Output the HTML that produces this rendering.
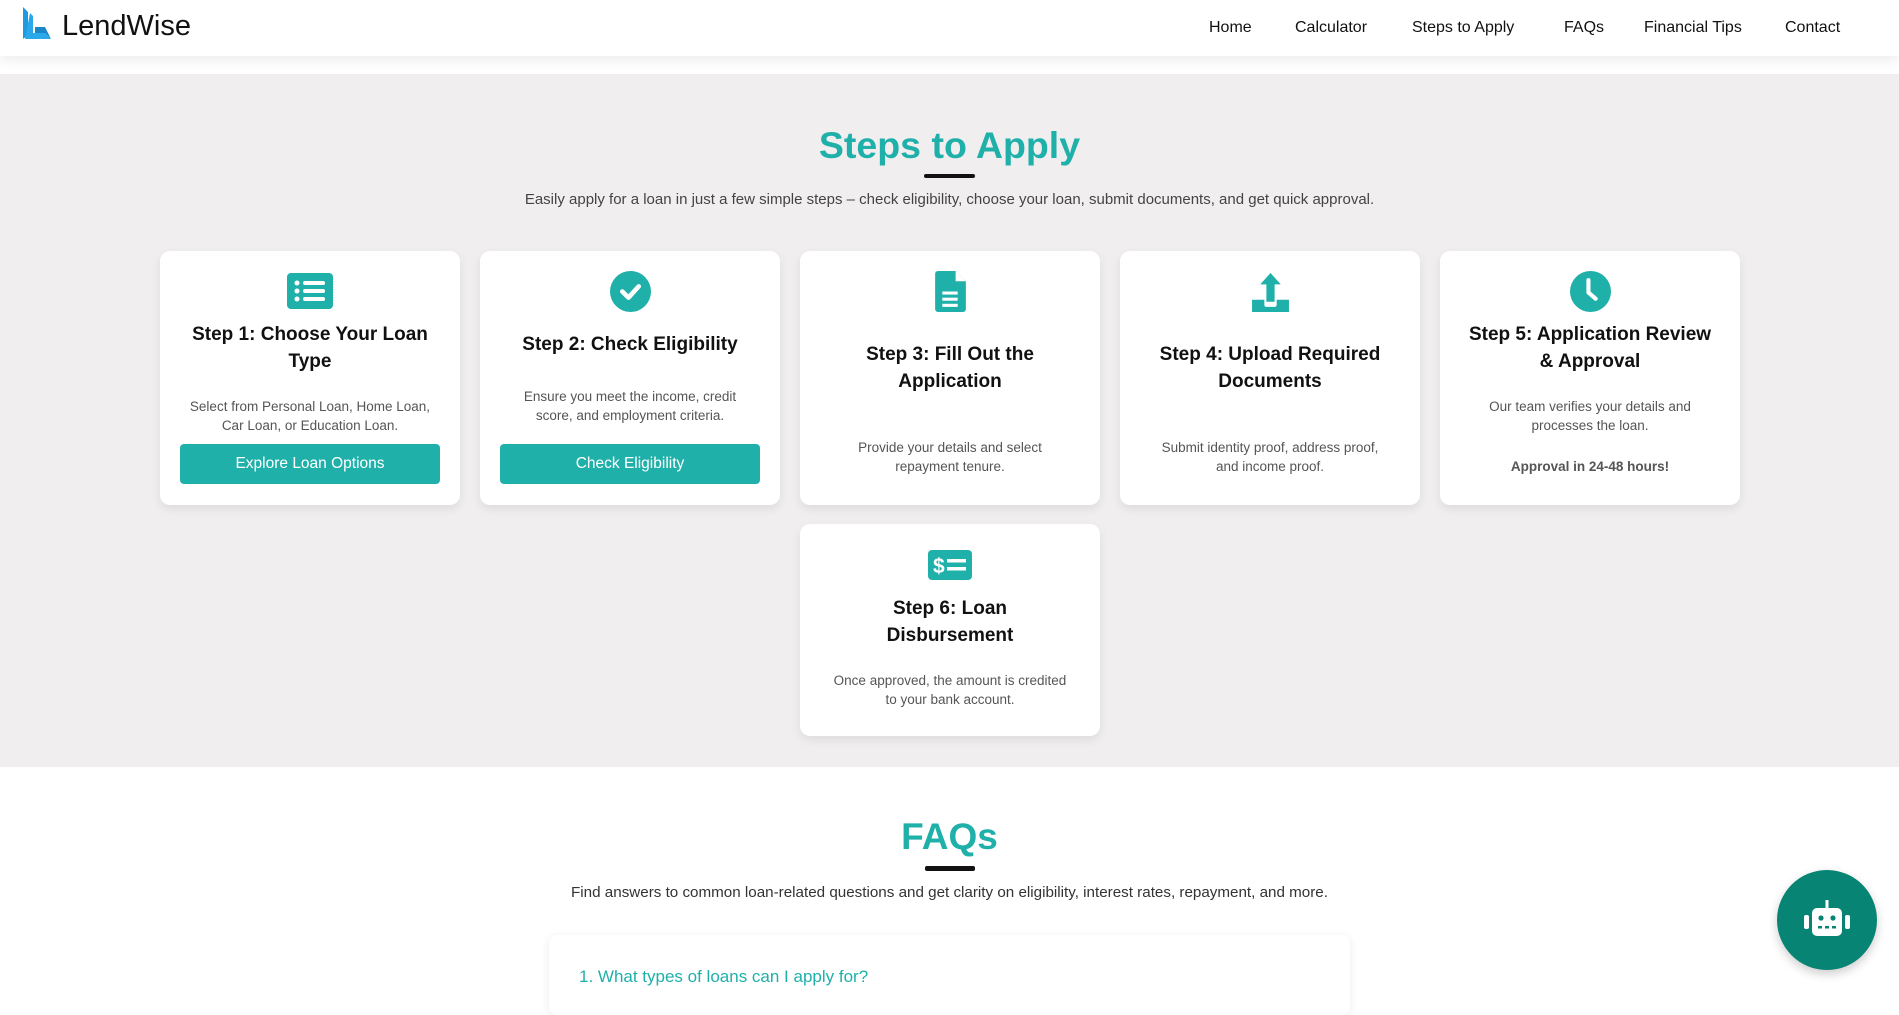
<!DOCTYPE html>
<html><head><meta charset="utf-8"><style>
*{margin:0;padding:0;box-sizing:border-box}
body{width:1899px;height:983px;overflow:hidden;font-family:"Liberation Sans",sans-serif;background:#fff;position:relative}
.hdr{position:absolute;left:0;top:0;width:1899px;height:56px;background:#fff;box-shadow:0 4px 12px rgba(0,0,0,.08);z-index:2}
.nav a{position:absolute;top:19px;font-size:16px;color:#111;text-decoration:none;white-space:nowrap}
.gray{position:absolute;left:0;top:74px;width:1899px;height:693px;background:#f0eeef}
.c{position:absolute;text-align:center;white-space:nowrap}
.card{position:absolute;width:300px;background:#fff;border-radius:10px;box-shadow:0 4px 10px rgba(0,0,0,.08)}
.card .ic{position:absolute;left:0;width:300px;display:flex;justify-content:center}
.card h3{position:absolute;left:0;width:300px;text-align:center;font-size:19px;line-height:27px;font-weight:bold;color:#111}
.card p{position:absolute;left:0;width:300px;text-align:center;font-size:13.5px;line-height:19px;color:#555}
.btn{position:absolute;left:20px;width:260px;height:40px;background:#20b0aa;border-radius:4px;color:#fff;font-size:15.5px;line-height:40px;text-align:center}
</style></head><body>
<div class="hdr">
<svg style="position:absolute;left:21px;top:5px" width="34" height="36" viewBox="0 0 34 36"><path d="M2 2 L7 7 L7 30 L2 34 Z" fill="#1e9be0"/><path d="M9 8 L12 11 L12 28 L24 28 L30 34 L4 34 Z" fill="#2aa9ea"/><path d="M14 22 L24 22 L30 34 L24 28 L14 28 Z" fill="#1a86c8"/></svg>
<div style="position:absolute;left:62px;top:10px;font-size:29px;color:#111">LendWise</div>
<div class="nav"><a style="left:1209px">Home</a><a style="left:1295px">Calculator</a><a style="left:1412px">Steps to Apply</a><a style="left:1564px">FAQs</a><a style="left:1644px">Financial Tips</a><a style="left:1785px">Contact</a></div>
</div>
<div class="gray"></div>
<div class="c" style="left:0;width:1899px;top:124px;font-size:37.5px;font-weight:bold;color:#20b0aa">Steps to Apply</div>
<div style="position:absolute;left:924px;top:174px;width:51px;height:4px;background:#111;border-radius:2px"></div>
<div class="c" style="left:0;width:1899px;top:191px;font-size:15px;color:#444">Easily apply for a loan in just a few simple steps – check eligibility, choose your loan, submit documents, and get quick approval.</div>

<div class="card" style="left:160px;top:251px;height:254px">
<div class="ic" style="top:22px"><svg width="46" height="36" viewBox="0 0 46 36"><rect width="46" height="36" rx="4" fill="#20b0aa"/><circle cx="10" cy="10" r="2.5" fill="#fff"/><circle cx="10" cy="18" r="2.5" fill="#fff"/><circle cx="10" cy="26" r="2.5" fill="#fff"/><rect x="16" y="8" width="22" height="4" rx="2" fill="#fff"/><rect x="16" y="16" width="22" height="4" rx="2" fill="#fff"/><rect x="16" y="24" width="22" height="4" rx="2" fill="#fff"/></svg></div>
<h3 style="top:70px">Step 1: Choose Your Loan<br>Type</h3>
<p style="top:146px">Select from Personal Loan, Home Loan,<br>Car Loan, or Education Loan.</p>
<div class="btn" style="top:193px">Explore Loan Options</div>
</div>
<div class="card" style="left:480px;top:251px;height:254px">
<div class="ic" style="top:20px"><svg width="41" height="41" viewBox="0 0 40 40"><circle cx="20" cy="20" r="20" fill="#20b0aa"/><path d="M12 20 L18 26 L28 15" stroke="#fff" stroke-width="4.5" fill="none" stroke-linecap="round" stroke-linejoin="round"/></svg></div>
<h3 style="top:80px">Step 2: Check Eligibility</h3>
<p style="top:136px">Ensure you meet the income, credit<br>score, and employment criteria.</p>
<div class="btn" style="top:193px">Check Eligibility</div>
</div>
<div class="card" style="left:800px;top:251px;height:254px">
<div class="ic" style="top:20px"><svg width="31" height="41" viewBox="0 0 30 40"><path d="M3 0 L20 0 L30 10 L30 37 Q30 40 27 40 L3 40 Q0 40 0 37 L0 3 Q0 0 3 0Z" fill="#20b0aa"/><path d="M20 0 L20 10 L30 10Z" fill="#fff"/><rect x="7" y="20" width="15" height="3" fill="#fff"/><rect x="7" y="26" width="15" height="3" fill="#fff"/><rect x="7" y="32" width="15" height="3" fill="#fff"/></svg></div>
<h3 style="top:90px">Step 3: Fill Out the<br>Application</h3>
<p style="top:187px">Provide your details and select<br>repayment tenure.</p>
</div>
<div class="card" style="left:1120px;top:251px;height:254px">
<div class="ic" style="top:20px"><svg width="41" height="41" viewBox="0 0 40 40"><path d="M20 2 L30 13 L24 13 L24 30 L16 30 L16 13 L10 13Z" fill="#20b0aa"/><path d="M2 28 L14 28 L14 33 Q14 35 16 35 L24 35 Q26 35 26 33 L26 28 L38 28 L38 40 L2 40Z" fill="#20b0aa"/></svg></div>
<h3 style="top:90px">Step 4: Upload Required<br>Documents</h3>
<p style="top:187px">Submit identity proof, address proof,<br>and income proof.</p>
</div>
<div class="card" style="left:1440px;top:251px;height:254px">
<div class="ic" style="top:20px"><svg width="41" height="41" viewBox="0 0 40 40"><circle cx="20" cy="20" r="20" fill="#20b0aa"/><path d="M18 9 L18 21 L25 27" stroke="#fff" stroke-width="4" fill="none" stroke-linecap="round" stroke-linejoin="round"/></svg></div>
<h3 style="top:70px">Step 5: Application Review<br>&amp; Approval</h3>
<p style="top:146px">Our team verifies your details and<br>processes the loan.</p>
<p style="top:206px;font-weight:bold">Approval in 24-48 hours!</p>
</div>
<div class="card" style="left:800px;top:524px;height:212px">
<div class="ic" style="top:26px"><svg width="44" height="30" viewBox="0 0 44 30"><rect width="44" height="30" rx="4" fill="#20b0aa"/><text x="5" y="23" font-family="Liberation Sans" font-weight="bold" font-size="21" fill="#fff">$</text><rect x="19" y="9" width="19" height="3.5" fill="#fff"/><rect x="19" y="17" width="19" height="3.5" fill="#fff"/></svg></div>
<h3 style="top:71px">Step 6: Loan<br>Disbursement</h3>
<p style="top:147px">Once approved, the amount is credited<br>to your bank account.</p>
</div>

<div class="c" style="left:0;width:1899px;top:816px;font-size:37px;font-weight:bold;color:#20b0aa">FAQs</div>
<div style="position:absolute;left:925px;top:866px;width:50px;height:5px;background:#111;border-radius:2px"></div>
<div class="c" style="left:0;width:1899px;top:884px;font-size:15.2px;color:#333">Find answers to common loan-related questions and get clarity on eligibility, interest rates, repayment, and more.</div>
<div style="position:absolute;left:549px;top:935px;width:801px;height:80px;background:#fff;border-radius:8px;box-shadow:0 2px 10px rgba(0,0,0,.08)"></div>
<div style="position:absolute;left:579px;top:967px;font-size:17px;color:#20b0aa">1. What types of loans can I apply for?</div>

<div style="position:absolute;left:1777px;top:870px;width:100px;height:100px;border-radius:50%;background:#078474;box-shadow:0 4px 10px rgba(0,0,0,.2)">
<svg style="position:absolute;left:26px;top:28px" width="48" height="44" viewBox="0 0 48 44"><rect x="22.5" y="2" width="3" height="8" fill="#fff"/><rect x="9" y="10" width="30" height="28" rx="5" fill="#fff"/><rect x="1" y="17" width="5" height="14" rx="2" fill="#fff"/><rect x="42" y="17" width="5" height="14" rx="2" fill="#fff"/><circle cx="18" cy="20" r="2.6" fill="#078474"/><circle cx="30" cy="20" r="2.6" fill="#078474"/><rect x="15" y="28" width="4" height="2.5" fill="#078474"/><rect x="22" y="28" width="4" height="2.5" fill="#078474"/><rect x="29" y="28" width="4" height="2.5" fill="#078474"/></svg>
</div>
</body></html>
